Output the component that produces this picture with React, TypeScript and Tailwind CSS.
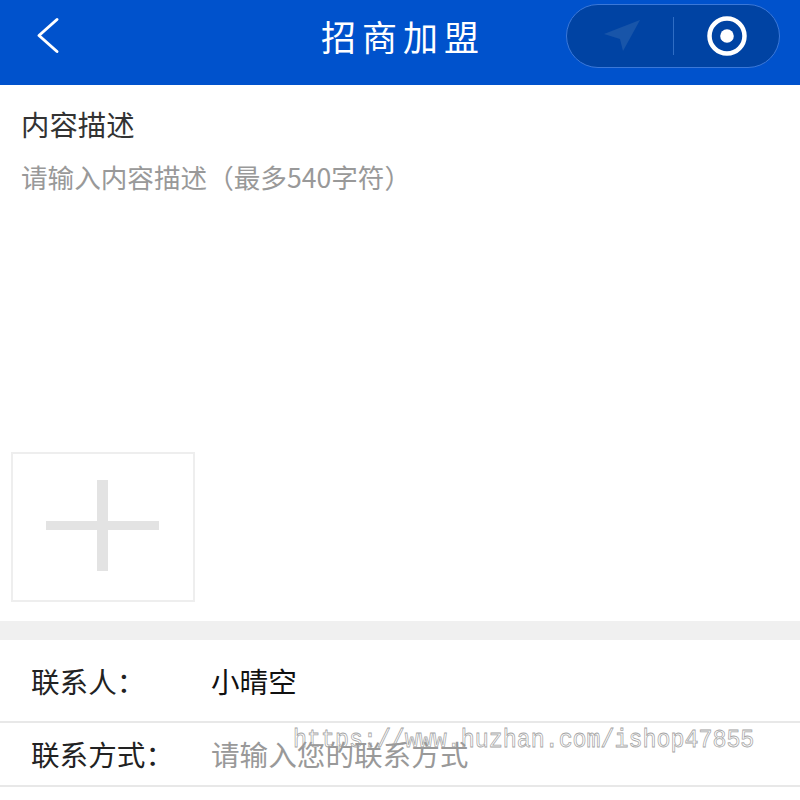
import React from 'react';

const sans = "font-['Noto_Sans_CJK_SC','Liberation_Sans',sans-serif]";

function NavBar() {
  return (
    <header className="flex h-[85px] items-start bg-[#0052cc]">
      <div className="flex h-[70px] w-[566px] items-center pl-[34px]">
        <svg width="28" height="40" viewBox="0 0 28 40" fill="none" className="mt-[2px] shrink-0">
          <path d="M23 3.5 L5 19.5 L23 35.5" stroke="#fff" strokeWidth="3" strokeLinecap="round" strokeLinejoin="round" fill="none" />
        </svg>
        <h1 className="ml-[259px] shrink-0 whitespace-nowrap font-['Noto_Sans_CJK_SC',serif] text-[35px] leading-none font-normal tracking-[6px] text-white">
          招商加盟
        </h1>
      </div>
      <div className="mt-[4px] flex h-[64px] w-[214px] items-center rounded-full border border-[#3b78d8] bg-[#0043a3]">
        <div className="flex w-[106px] justify-center pl-[4px]">
          <svg width="40" height="34" viewBox="0 0 40 34">
            <path d="M38 1 L2 15 L18 20 L21 32 Z" fill="#1855a9" />
          </svg>
        </div>
        <div className="h-[38px] w-px bg-[#2f6dc4]" />
        <div className="flex flex-1 justify-center">
          <svg width="42" height="42" viewBox="0 0 42 42">
            <circle cx="21" cy="21" r="17.5" fill="none" stroke="#fff" strokeWidth="4.5" />
            <circle cx="21" cy="21" r="6.8" fill="#fff" />
          </svg>
        </div>
      </div>
    </header>
  );
}

function ContactRow({ label, value, placeholder }: { label: string; value?: string; placeholder?: string }) {
  return (
    <div className="flex items-center pl-[31px] text-[28.6px] leading-none">
      <span className="w-[180px] text-[#222]">{label}</span>
      {value ? <span className="text-[#111]">{value}</span> : <span className="text-[#999]">{placeholder}</span>}
    </div>
  );
}

export default function App() {
  return (
    <div className={`relative h-[800px] w-[800px] overflow-hidden bg-white antialiased ${sans}`}>
      <NavBar />

      <section className="h-[536px]">
        <div className="pt-[23px] pl-[21px] text-[28.4px] leading-[32px] text-[#333]">内容描述</div>
        <div className="mt-[22px] pl-[21px] text-[26.6px] leading-[30px] text-[#999]">请输入内容描述（最多540字符）</div>
        <button className="relative mt-[260px] ml-[11px] flex h-[150px] w-[184px] items-center justify-center border-2 border-[#eeeeee] pr-[2px] pb-[3px]">
          <span className="h-[9px] w-[113px] bg-[#e3e3e3]" />
          <span className="absolute h-[91px] w-[11px] bg-[#e3e3e3]" />
        </button>
      </section>

      <div className="h-[19px] bg-[#f0f0f0]" />

      <div className="flex h-[83px] items-center border-b-2 border-[#e8e8e8] pt-[1px]">
        <ContactRow label="联系人：" value="小晴空" />
      </div>
      <div className="flex h-[64px] items-center border-b-2 border-[#e8e8e8] pt-[1px]">
        <ContactRow label="联系方式：" placeholder="请输入您的联系方式" />
      </div>

      {/* site watermark over the form */}
      <div className="absolute top-[724px] left-[293px] scale-y-110 whitespace-nowrap font-['Liberation_Mono',monospace] text-[23.3px] leading-[32px] text-white/0 opacity-95 [-webkit-text-stroke:0.7px_#a0a0a0]">
        https://www.huzhan.com/ishop47855
      </div>
    </div>
  );
}
